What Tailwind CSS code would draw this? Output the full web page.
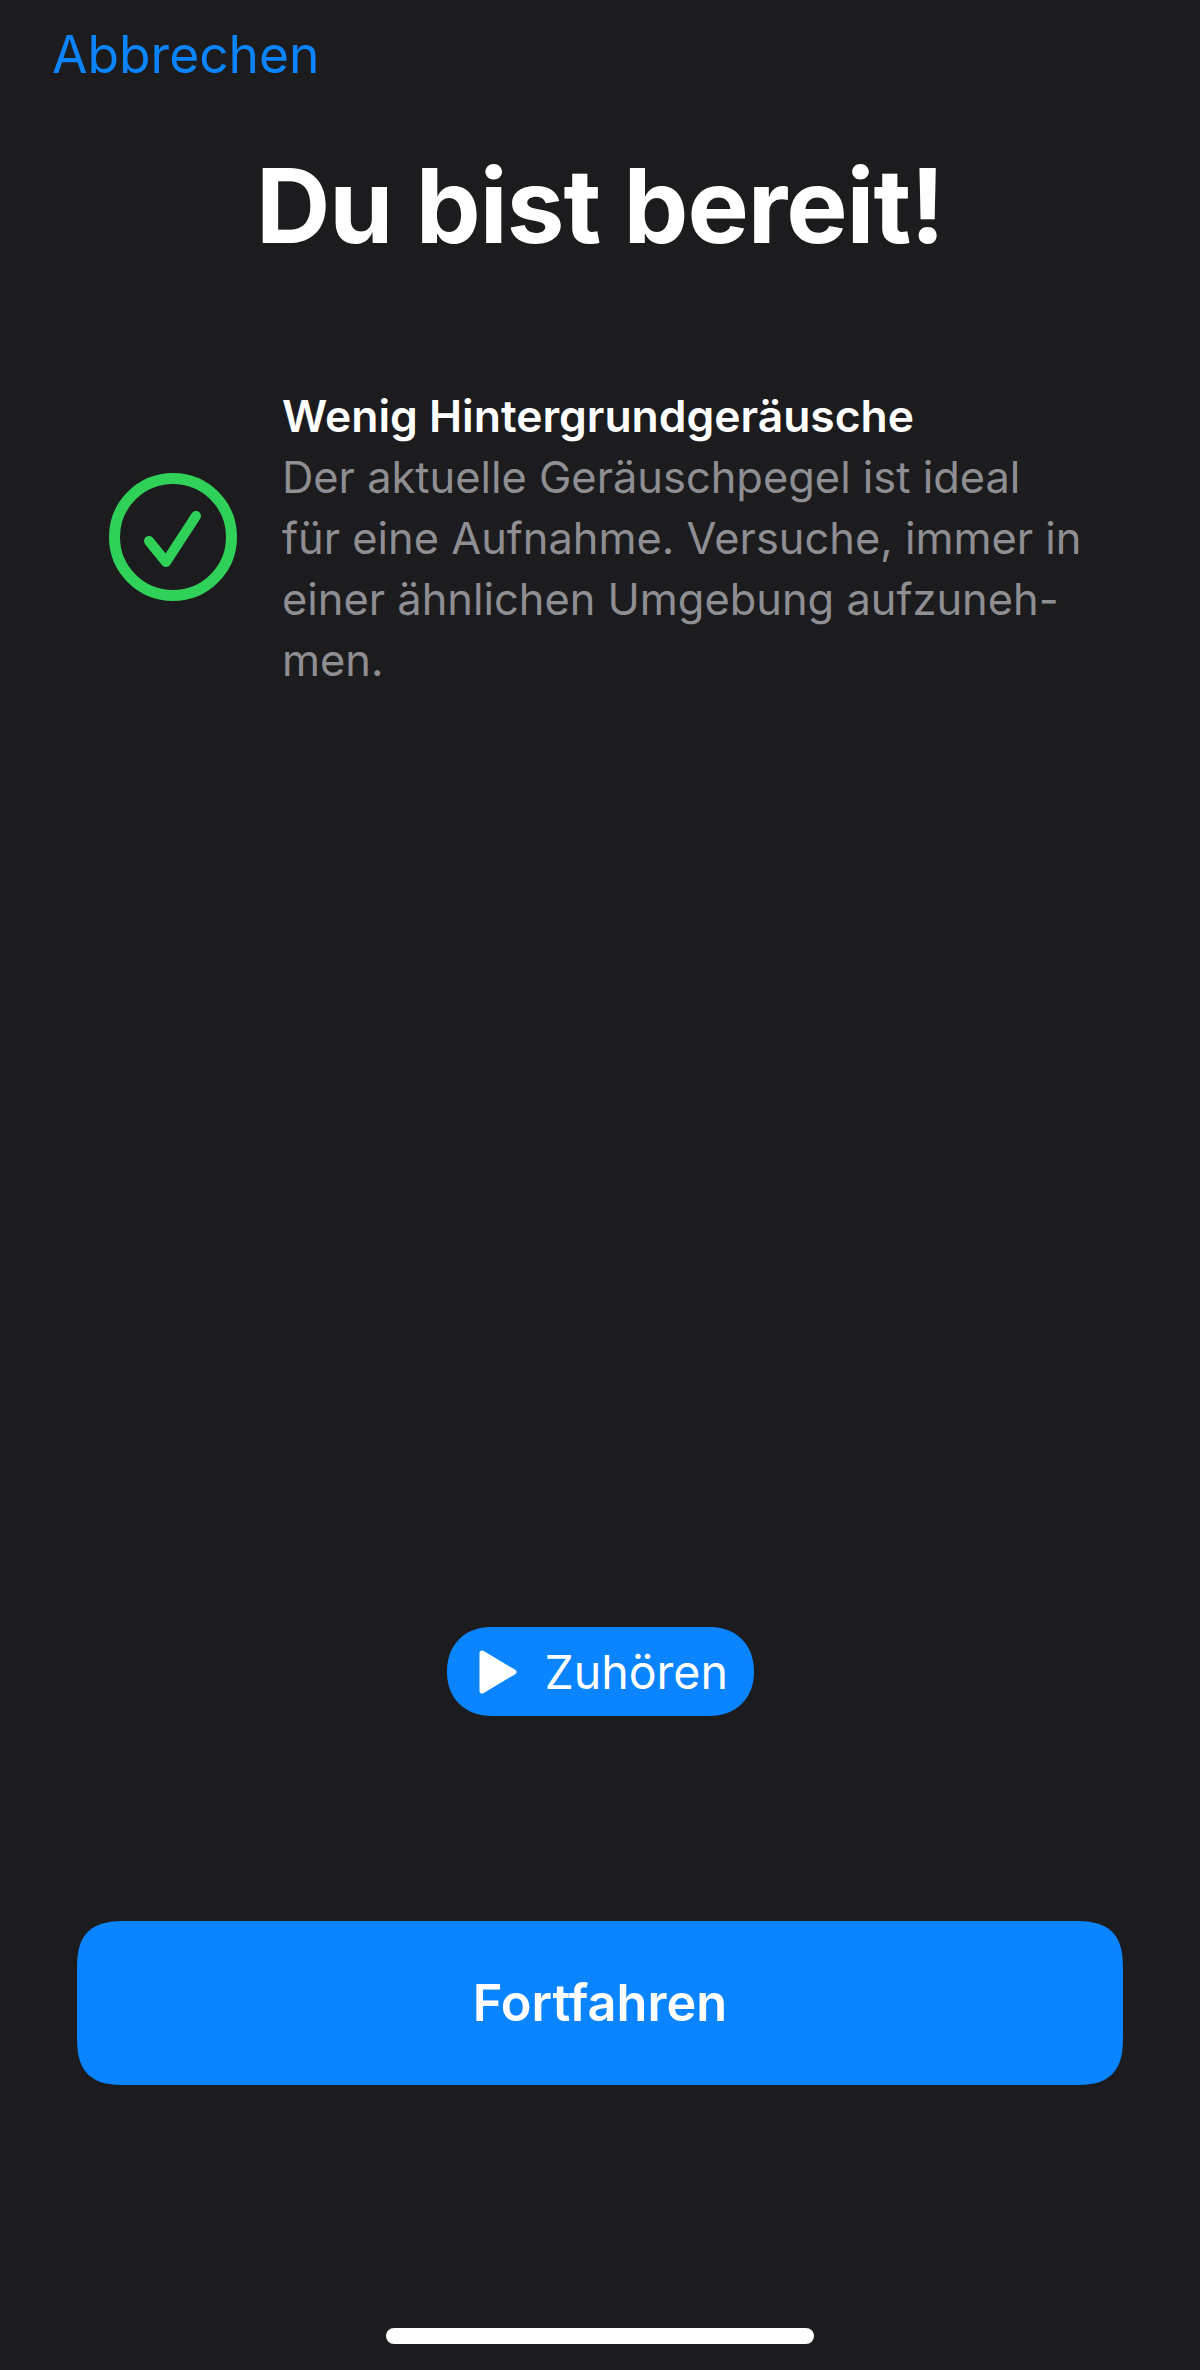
<!DOCTYPE html>
<html lang="de">
<head>
    <meta charset="UTF-8">
    <meta name="viewport" content="width=device-width, initial-scale=1.0">
    <title>Du bist bereit!</title>
    <script src="https://cdn.jsdelivr.net/npm/@tailwindcss/browser@4"></script>
</head>
<body class="bg-[#1c1c1e] font-['Inter','Liberation_Sans',sans-serif]">

    <div class="h-[2370px] flex flex-col overflow-hidden">

        <!-- Top bar -->
        <header class="pl-[52px] pt-[23px] h-[106px]">
            <a class="text-[51.5px] leading-[62px] text-[#0a84ff]">Abbrechen</a>
        </header>

        <h1 class="mt-[38px] text-center text-[103px] leading-[124px] font-bold text-white tracking-[-1px]">Du bist bereit!</h1>

        <!-- Status row -->
        <section class="mt-[118px] flex items-center pl-[109px]">
            <svg class="w-[128px] h-[128px] shrink-0 -mt-[3px]" viewBox="0 0 128 128" fill="none" stroke="#30d158" stroke-linecap="round" stroke-linejoin="round">
                <circle cx="64" cy="64" r="58.5" stroke-width="11"/>
                <path d="M40 68 L57 89 L87 43" stroke-width="10"/>
            </svg>
            <div class="ml-[45px] w-[830px]">
                <h2 class="text-[44.4px] leading-[61px] font-semibold text-white">Wenig Hintergrundgeräusche</h2>
                <p class="text-[43.4px] leading-[61px] text-[#8e8e93]">Der aktuelle Geräuschpegel ist ideal<br>für eine Aufnahme. Versuche, immer in<br>einer ähnlichen Umgebung aufzuneh-<br>men.</p>
            </div>
        </section>

        <div class="flex-1"></div>

        <!-- Listen button -->
        <div class="flex justify-center">
            <button class="h-[89px] w-[307px] flex items-center pl-[32px] rounded-[44px] [corner-shape:superellipse(1.1)] bg-[#0a84ff] text-white">
                <svg class="w-[38px] h-[44px] shrink-0" viewBox="0 0 38 44" fill="#fff" stroke="#fff" stroke-width="5" stroke-linejoin="round">
                    <path d="M3 3 L35 22 L3 41 Z"/>
                </svg>
                <span class="ml-[28px] text-[46.5px] leading-[60px]">Zuhören</span>
            </button>
        </div>

        <!-- Continue button -->
        <div class="mt-[205px] px-[77px]">
            <button class="w-full h-[164px] rounded-[50px] [corner-shape:superellipse(1.5)] bg-[#0a84ff] text-white text-[50.5px] font-semibold">Fortfahren</button>
        </div>

        <!-- Home indicator -->
        <div class="mt-[243px] mb-[26px] flex justify-center">
            <div class="w-[428px] h-[16px] rounded-full bg-white"></div>
        </div>
    </div>

</body>
</html>
